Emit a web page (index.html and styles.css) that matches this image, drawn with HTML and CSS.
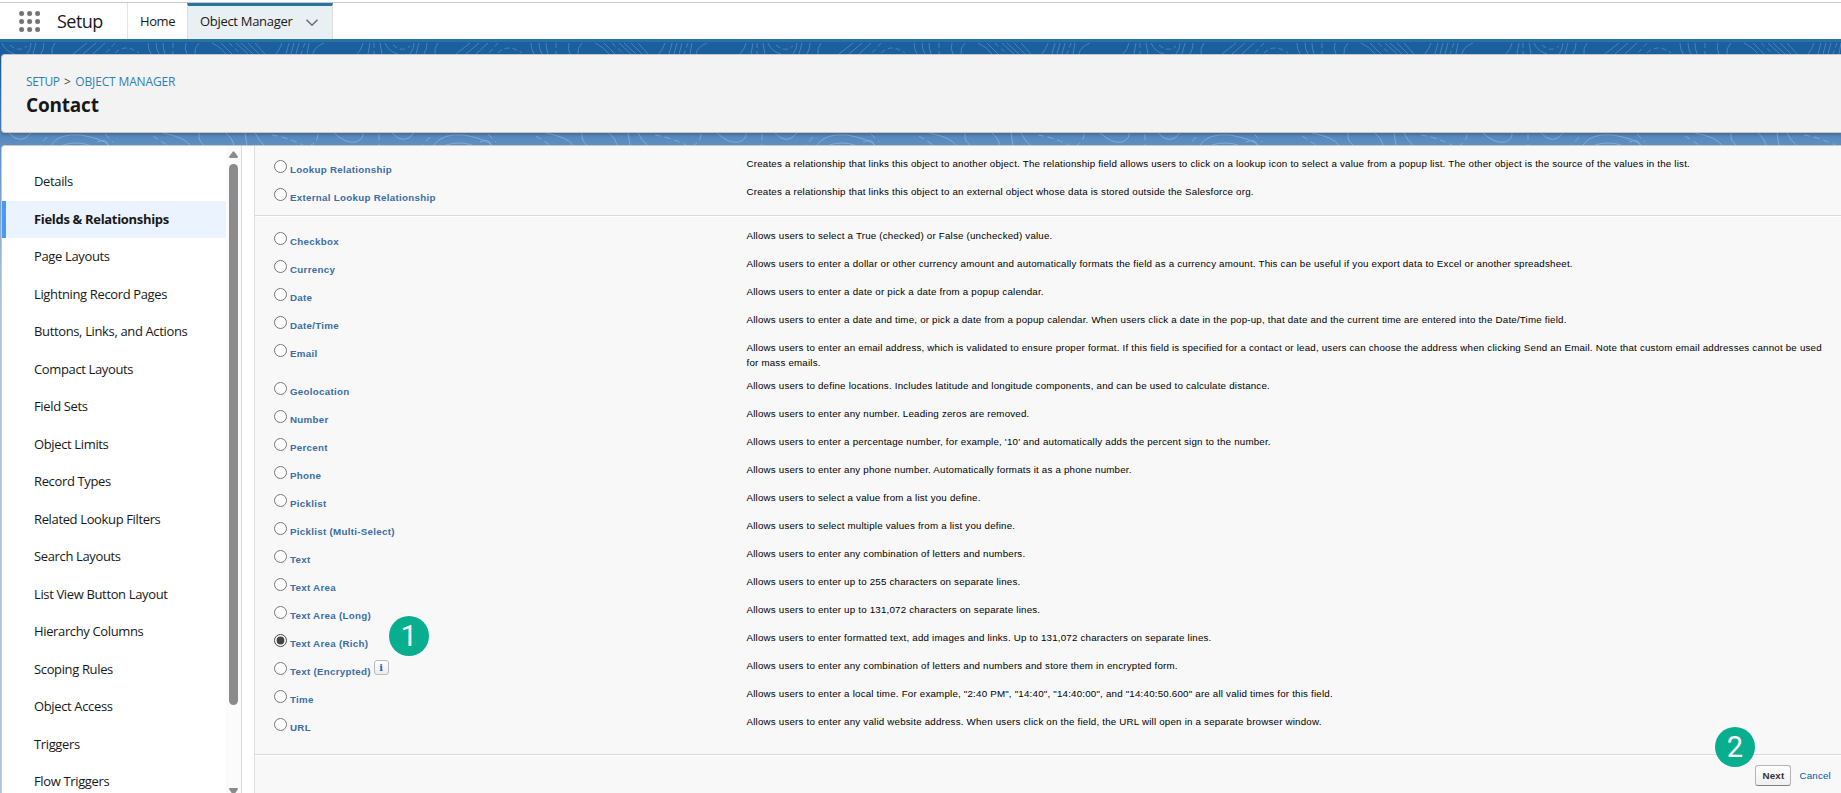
FILE: index.html
```html
<!DOCTYPE html>
<html lang="en">
<head>
    <meta charset="UTF-8">
    <title>Contact | Object Manager</title>
    <link rel="stylesheet" href="styles.css">
</head>
<body>
<div class="nav">
    <svg class="waffle" width="22" height="22" viewBox="0 0 22 22">
        <circle cx="2.6" cy="2.6" r="2.5"/><circle cx="10.6" cy="2.6" r="2.5"/><circle cx="18.6" cy="2.6" r="2.5"/>
        <circle cx="2.6" cy="10.6" r="2.5"/><circle cx="10.6" cy="10.6" r="2.5"/><circle cx="18.6" cy="10.6" r="2.5"/>
        <circle cx="2.6" cy="18.6" r="2.5"/><circle cx="10.6" cy="18.6" r="2.5"/><circle cx="18.6" cy="18.6" r="2.5"/>
    </svg>
    <div class="app-name"><span>Setup</span></div>
    <a class="tab">Home</a>
    <a class="tab active"><span>Object Manager</span>
        <svg width="12" height="8" viewBox="0 0 12 8"><path d="M1 1.2L6 6.2L11 1.2" fill="none" stroke="#706e6b" stroke-width="1.6" stroke-linecap="round"/></svg>
    </a>
</div>
<div class="stage">
    <svg class="band top" width="100%" height="12">
        <defs>
            <pattern id="topo-dark" width="383" height="12" patternUnits="userSpaceOnUse">
                <g fill="none" stroke="#4a82b8" stroke-width="1">
                    <path d="M1 1Q5 10 14 12M30 1Q30 7 26 12M35 1L32 12M43 1Q43 7 40 12M54 1Q50 6 51 12"/>
                    <path d="M86 1L72 12M95 1L82 12M104 1L92 12M147 1Q147 7 150 12M155 1Q155 7 158 12M162 1Q162 7 164 12M185 1Q183 7 186 12M198 1Q193 6 194 12"/>
                    <path d="M211 1Q220 5 225 12M220 1L231 12M235 1L247 12M240 1L252 12M247 1L258 12M254 1L264 12"/>
                    <path d="M281 1Q279 7 275 12M288 1L285 12M293 1L290 12M298 1L295 12M308 1L306 12M323 1Q313 5 312 12M362 1Q361 7 356 12M369 1L367 12M379 1L381 12"/>
                    <path stroke-dasharray="5 3" d="M9 3Q18 11 26 4M114 1L104 12M114 11Q124 1 138 11M172 1V12M228 1L240 12M304 1L300 12M373 1V12"/>
                </g>
            </pattern>
        </defs>
        <rect width="100%" height="12" fill="url(#topo-dark)"/>
    </svg>
    <div class="header-card">
        <div class="crumbs"><a>SETUP</a><i>&gt;</i><a>OBJECT MANAGER</a></div>
        <h1>Contact</h1>
    </div>
    <svg class="band" width="100%" height="12">
        <defs>
            <pattern id="topo-light" width="383" height="12" patternUnits="userSpaceOnUse">
                <g fill="none" stroke="#84a9d4" stroke-width="1">
                    <path d="M8 0Q20 13 30 0M50 12Q58 0 80 2Q102 6 108 12M62 12Q75 8 88 12M96 9Q106 5 107 12"/>
                    <path d="M162 0Q183 4 189 12M198 0Q197 8 203 12M225 0Q232 6 233 12M244 0L246 12M254 0Q258 8 263 12M333 0Q345 11 355 9Q363 6 362 0"/>
                    <path stroke-dasharray="6 4" d="M46 4L39 12M104 1L112 9M152 3L166 12M271 2Q285 4 302 12M317 1Q317 8 310 12M378 1V12"/>
                </g>
            </pattern>
        </defs>
        <rect width="100%" height="12" fill="url(#topo-light)"/>
    </svg>
    <div class="main">
        <div class="sidebar">
            <ul>
                <li>Details</li>
                <li class="selected">Fields &amp; Relationships</li>
                <li>Page Layouts</li>
                <li>Lightning Record Pages</li>
                <li>Buttons, Links, and Actions</li>
                <li>Compact Layouts</li>
                <li>Field Sets</li>
                <li>Object Limits</li>
                <li>Record Types</li>
                <li>Related Lookup Filters</li>
                <li>Search Layouts</li>
                <li>List View Button Layout</li>
                <li>Hierarchy Columns</li>
                <li>Scoping Rules</li>
                <li>Object Access</li>
                <li>Triggers</li>
                <li>Flow Triggers</li>
            </ul>
            <div class="scrollbar">
                <svg width="9" height="7" viewBox="0 0 9 7"><path d="M3.6.8Q4.5-.3 5.4.8L8.8 5.4Q9.2 7 8 7H1Q-.2 7 .2 5.4Z"/></svg>
                <div class="thumb"></div>
                <svg width="9" height="7" viewBox="0 0 9 7"><path d="M3.6 6.2Q4.5 7.3 5.4 6.2L8.8 1.6Q9.2 0 8 0H1Q-.2 0 .2 1.6Z"/></svg>
            </div>
        </div>
        <div class="content">
            <div class="group relations">
                <div class="row"><label><input type="radio" name="type">Lookup Relationship</label><p>Creates a relationship that links this object to another object. The relationship field allows users to click on a lookup icon to select a value from a popup list. The other object is the source of the values in the list.</p></div>
                <div class="row"><label><input type="radio" name="type">External Lookup Relationship</label><p>Creates a relationship that links this object to an external object whose data is stored outside the Salesforce org.</p></div>
            </div>
            <div class="group types">
                <div class="row"><label><input type="radio" name="type">Checkbox</label><p>Allows users to select a True (checked) or False (unchecked) value.</p></div>
                <div class="row"><label><input type="radio" name="type">Currency</label><p>Allows users to enter a dollar or other currency amount and automatically formats the field as a currency amount. This can be useful if you export data to Excel or another spreadsheet.</p></div>
                <div class="row"><label><input type="radio" name="type">Date</label><p>Allows users to enter a date or pick a date from a popup calendar.</p></div>
                <div class="row"><label><input type="radio" name="type">Date/Time</label><p>Allows users to enter a date and time, or pick a date from a popup calendar. When users click a date in the pop-up, that date and the current time are entered into the Date/Time field.</p></div>
                <div class="row"><label><input type="radio" name="type">Email</label><p>Allows users to enter an email address, which is validated to ensure proper format. If this field is specified for a contact or lead, users can choose the address when clicking Send an Email. Note that custom email addresses cannot be used<br>for mass emails.</p></div>
                <div class="row"><label><input type="radio" name="type">Geolocation</label><p>Allows users to define locations. Includes latitude and longitude components, and can be used to calculate distance.</p></div>
                <div class="row"><label><input type="radio" name="type">Number</label><p>Allows users to enter any number. Leading zeros are removed.</p></div>
                <div class="row"><label><input type="radio" name="type">Percent</label><p>Allows users to enter a percentage number, for example, '10' and automatically adds the percent sign to the number.</p></div>
                <div class="row"><label><input type="radio" name="type">Phone</label><p>Allows users to enter any phone number. Automatically formats it as a phone number.</p></div>
                <div class="row"><label><input type="radio" name="type">Picklist</label><p>Allows users to select a value from a list you define.</p></div>
                <div class="row"><label><input type="radio" name="type">Picklist (Multi-Select)</label><p>Allows users to select multiple values from a list you define.</p></div>
                <div class="row"><label><input type="radio" name="type">Text</label><p>Allows users to enter any combination of letters and numbers.</p></div>
                <div class="row"><label><input type="radio" name="type">Text Area</label><p>Allows users to enter up to 255 characters on separate lines.</p></div>
                <div class="row"><label><input type="radio" name="type">Text Area (Long)</label><p>Allows users to enter up to 131,072 characters on separate lines.</p></div>
                <div class="row"><label><input type="radio" name="type" checked>Text Area (Rich)</label><p>Allows users to enter formatted text, add images and links. Up to 131,072 characters on separate lines.</p></div>
                <div class="row"><label><input type="radio" name="type">Text (Encrypted)<span class="info">i</span></label><p>Allows users to enter any combination of letters and numbers and store them in encrypted form.</p></div>
                <div class="row"><label><input type="radio" name="type">Time</label><p>Allows users to enter a local time. For example, "2:40 PM", "14:40", "14:40:00", and "14:40:50.600" are all valid times for this field.</p></div>
                <div class="row"><label><input type="radio" name="type">URL</label><p>Allows users to enter any valid website address. When users click on the field, the URL will open in a separate browser window.</p></div>
            </div>
            <div class="buttons">
                <button>Next</button>
                <a>Cancel</a>
            </div>
        </div>
    </div>
</div>
<div class="step one">1</div>
<div class="step two">2</div>
</body>
</html>
```
FILE: styles.css
```css
*{
    margin: 0;
    padding: 0;
    box-sizing: border-box;
}
body{
    width: 1841px;
    height: 793px;
    overflow: hidden;
    position: relative;
    font-family: "Segoe UI", "Open Sans", sans-serif;
    font-size: 13px;
    color: #181818;
    background: #fff;
}
ul{
    list-style: none;
}
.nav{
    display: flex;
    height: 42px;
    padding-left: 19px;
    border-bottom: 3px solid #2574a3;
    background: linear-gradient(#fff 2px, #c9c9c9 2px, #c9c9c9 3px, #fff 3px);
}
.waffle{
    margin-top: 11px;
    fill: #747474;
}
.app-name{
    width: 87px;
    margin-top: 3px;
    padding-left: 16px;
    border-right: 1px solid #e5e5e5;
    font-size: 18px;
    line-height: 37px;
    letter-spacing: -0.55px;
}
.tab{
    width: 59px;
    margin-top: 3px;
    padding-left: 12px;
    line-height: 37px;
    letter-spacing: -0.4px;
}
.active{
    display: flex;
    justify-content: space-between;
    align-items: center;
    width: 146px;
    padding: 0 14px 0 12px;
    border: 1px solid #dcdfe0;
    border-width: 0 1px;
    border-top: 3px solid #2574a3;
    line-height: 31px;
    background: #e8f0f3;
    letter-spacing: -0.3px;
}
.active span{
    margin-top: -3px;
}
.stage{
    height: 751px;
    padding-left: 1px;
    background: linear-gradient(#1b5f9e 0, #1b5f9e 14px, #5286bb 88px, #5f8fc2 104px, #b0c4df 260px);
}
.band{
    display: block;
}
.header-card{
    position: relative;
    height: 79px;
    padding: 17px 0 0 24px;
    border: 1px solid #c9c6c3;
    border-right: 0;
    border-radius: 4px 0 0 4px;
    background: #f3f3f3;
    box-shadow: 0 2px 3px rgba(0,0,0,.2);
}
.crumbs{
    display: flex;
    height: 20px;
    line-height: 20px;
    font-size: 12px;
    letter-spacing: -0.15px;
    color: #444;
}
.crumbs a{
    color: #2f7fb4;
}
.crumbs a:first-child{
    letter-spacing: -0.45px;
}
.crumbs i{
    font-style: normal;
    margin: 0 4.5px;
}
h1{
    font-size: 19px;
    line-height: 27px;
    letter-spacing: -0.2px;
}
.main{
    display: flex;
    height: 650px;
    border: 1px solid #c9c9c9;
    border-width: 1px 0 0 1px;
    border-radius: 4px 0 0 0;
    background: #fff;
    overflow: hidden;
}
.sidebar{
    display: flex;
    width: 240px;
    border-right: 1px solid #dddbda;
}
.sidebar ul{
    width: 224px;
    padding-top: 17px;
}
.sidebar li{
    height: 37.5px;
    padding-left: 32px;
    line-height: 37px;
    letter-spacing: -0.36px;
}
.sidebar .selected{
    padding-left: 28px;
    border-left: 4px solid #4a97f8;
    background: #ebf4fe;
    font-weight: bold;
    letter-spacing: -0.32px;
}
.scrollbar{
    width: 15px;
    padding: 5px 0 0 3px;
    background: #fbfbfb;
}
.scrollbar svg{
    display: block;
    fill: #8b8b8b;
}
.thumb{
    width: 9px;
    height: 541px;
    margin: 6px 0 83px;
    border-radius: 5px;
    background: #8b8b8b;
}
.content{
    flex: 1;
    margin-left: 12px;
    border-left: 1px solid #e0e0e0;
    background: #f8f8f8;
    font-family: Arial, "Liberation Sans", sans-serif;
    font-size: 9.75px;
    letter-spacing: 0.2px;
    color: #000;
}
.group{
    border-bottom: 1px solid #d9d9d9;
    box-shadow: 0 1px 0 #fff;
}
.relations{
    height: 70px;
    padding-top: 5px;
}
.types{
    height: 539px;
    padding-top: 7px;
}
.row{
    display: flex;
    min-height: 28px;
    padding-left: 19px;
}
.row label{
    display: flex;
    width: 472.5px;
    height: 24px;
    padding-top: 11px;
    line-height: 15px;
    font-weight: bold;
    letter-spacing: 0.29px;
    color: #3a6ea5;
}
.row input{
    width: 13px;
    height: 13px;
    margin: -2px 3px 0 0;
    accent-color: #444;
}
.row p{
    padding: 5px 0 3px;
    line-height: 15px;
    white-space: nowrap;
}
.info{
    width: 15px;
    height: 15px;
    margin: -4px 0 0 3px;
    border: 1px solid #bbb;
    border-radius: 3px;
    background: linear-gradient(#fff, #ececec);
    color: #1468c7;
    line-height: 13px;
    text-align: center;
    font-family: "DejaVu Serif", serif;
}
.buttons{
    display: flex;
    justify-content: flex-end;
    align-items: center;
    padding: 10px 10px 0 0;
}
.buttons button{
    width: 36px;
    height: 21px;
    border: 1px solid #b5b5b5;
    border-bottom-color: #7f7f7f;
    border-radius: 3px;
    background: linear-gradient(#fff, #f0f0f0);
    font: bold 9.75px Arial, "Liberation Sans", sans-serif;
    letter-spacing: 0.2px;
    color: #333;
}
.buttons a{
    margin-left: 8px;
    color: #015ba7;
}
.step{
    position: absolute;
    width: 40px;
    height: 40px;
    border-radius: 50%;
    background: #08ae8e;
    color: #fff;
    font: 29px/41px Roboto, sans-serif;
    text-align: center;
}
.one{
    left: 389px;
    top: 616px;
}
.two{
    left: 1715px;
    top: 727px;
}
```
